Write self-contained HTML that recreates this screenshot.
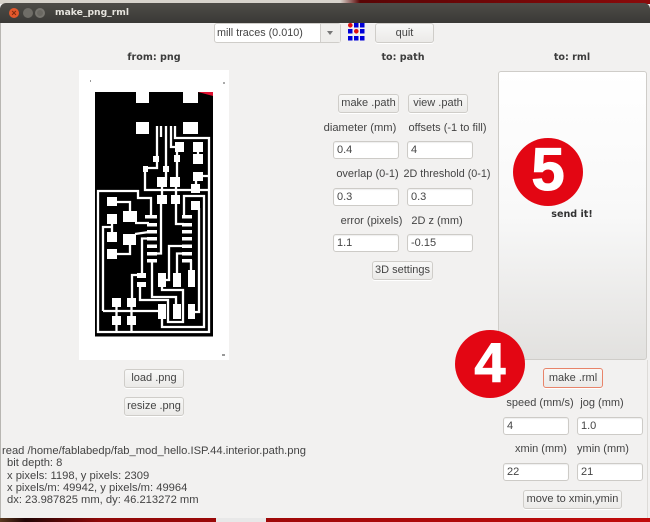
<!DOCTYPE html>
<html><head><meta charset="utf-8"><style>
html,body{margin:0;padding:0}
body{width:650px;height:522px;overflow:hidden;position:relative;background:#f2f1f0;font-family:"Liberation Sans",sans-serif;font-size:11px;color:#444}
div{position:absolute;box-sizing:border-box}
.l{white-space:nowrap;text-align:center;height:14px;line-height:14px}
.h{font-family:"DejaVu Sans",sans-serif;font-weight:bold;font-size:9.6px;white-space:nowrap;text-align:center;color:#3c3c3c;height:14px;line-height:14px}
.b{border:1px solid #cfcdc9;border-radius:3px;background:linear-gradient(#f8f8f7,#ebeae8);text-align:center;white-space:nowrap;height:20px;line-height:18px;box-shadow:0 1px 0 #fff}
.i{border:1px solid #cdcbc7;border-radius:3px;background:#fff;height:18px;width:66px;line-height:17px;padding-left:3px;box-shadow:inset 0 1px 1px #eee}
.t{left:2px;white-space:nowrap;height:13px;line-height:13px;font-size:11.2px}
.c{border-radius:50%;background:#e30613}
.n{font-weight:bold;font-size:60px;color:#fff;text-align:center;line-height:70px;height:70px;width:70px;-webkit-text-stroke:1px #fff}
</style></head><body>
<div style="left:0;top:0;width:650px;height:4px;background:linear-gradient(90deg,#d8d4cc 0,#d8d4cc 340px,#5a0505 360px,#8a0a0a 100%)"></div>
<div style="left:0;top:3px;width:650px;height:20px;background:linear-gradient(#4e4c47,#3a3936);border-radius:6px 6px 0 0"></div>
<div style="left:9px;top:8px;width:10px;height:10px;border-radius:50%;background:#e2582c"></div>
<div style="left:9px;top:8px;width:10px;height:10px;line-height:10px;text-align:center;font-size:9px;font-weight:bold;color:#7a2a10">×</div>
<div style="left:23px;top:8px;width:10px;height:10px;border-radius:50%;background:#6f6d67"></div>
<div style="left:35px;top:8px;width:10px;height:10px;border-radius:50%;background:#6a6862;border:2px solid #77756f"></div>
<div style="left:55px;top:5px;height:15px;line-height:15px;font-family:'DejaVu Sans',sans-serif;font-weight:bold;font-size:9.2px;color:#e6e4de;white-space:nowrap">make_png_rml</div>

<div style="left:0;top:23px;width:650px;height:495px;background:#f2f1f0;border-left:1px solid #b8b6b2"></div>
<div style="left:647px;top:360px;width:1px;height:158px;background:#dddbd8"></div>

<div style="left:214px;top:23px;width:127px;height:20px;border:1px solid #cfcdc9;border-radius:3px;background:#fff"></div>
<div style="left:217px;top:23px;height:20px;line-height:20px;white-space:nowrap;font-size:10.8px">mill traces (0.010)</div>
<div style="left:320px;top:24px;width:20px;height:18px;background:#efeeec;border-left:1px solid #d0cecb"></div>
<div style="left:327px;top:31px;width:0;height:0;border-left:3.5px solid transparent;border-right:3.5px solid transparent;border-top:4px solid #777"></div>
<svg style="position:absolute;left:348px;top:23px" width="18" height="18" viewBox="0 0 18 18">
<g fill="#0000d8"><rect x="6" y="0" width="4.5" height="4.5"/><rect x="12" y="0" width="4.5" height="4.5"/><rect x="0" y="6" width="4.5" height="4.5"/><rect x="12" y="6" width="4.5" height="4.5"/><rect x="0" y="13" width="4.5" height="4.5"/><rect x="6" y="13" width="4.5" height="4.5"/><rect x="12" y="13" width="4.5" height="4.5"/></g>
<circle cx="2.3" cy="2.3" r="2.3" fill="#e01010"/><circle cx="8.3" cy="8.3" r="2.3" fill="#e01010"/></svg>
<div class="b" style="left:375px;top:23px;width:59px;height:20px">quit</div>

<div class="h" style="left:104px;top:51px;width:100px">from: png</div>
<div class="h" style="left:353px;top:51px;width:100px">to: path</div>
<div class="h" style="left:522px;top:51px;width:100px">to: rml</div>

<svg style="position:absolute;left:79px;top:70px;filter:blur(.3px)" width="150" height="290" viewBox="79 70 150 290">
<rect x="79" y="70" width="150" height="290" fill="#fff"/>
<rect x="90" y="80" width="1" height="2" fill="#999"/><rect x="223" y="82" width="2" height="2" fill="#aaa"/><rect x="222" y="354" width="3" height="2" fill="#999"/>
<rect x="95" y="92" width="118" height="244.5" fill="#000"/>
<polygon points="198,92 213,92 213,96" fill="#e01030"/>
<g fill="#fff">
<rect x="136" y="92" width="13" height="11"/><rect x="183" y="92" width="15" height="11"/>
<rect x="136" y="122" width="13" height="12"/><rect x="183" y="122" width="15" height="12"/>
<rect x="175" y="142" width="9" height="10"/><rect x="193" y="142" width="10" height="10"/><rect x="193" y="154" width="10" height="10"/>
<rect x="153" y="156" width="6" height="6"/><rect x="174" y="155" width="6" height="7"/><rect x="163" y="166" width="6" height="6"/><rect x="143" y="166" width="5" height="6"/>
<rect x="157" y="177" width="10" height="10"/><rect x="170" y="177" width="10" height="10"/>
<rect x="193" y="172" width="10" height="9"/><rect x="191" y="184" width="9" height="9"/>
<rect x="157" y="195" width="10" height="9"/><rect x="171" y="195" width="9" height="9"/><rect x="191" y="201" width="9" height="9"/>
<rect x="107" y="197" width="10" height="9"/><rect x="123" y="211" width="14" height="11"/><rect x="107" y="214" width="10" height="10"/><rect x="107" y="232" width="10" height="10"/><rect x="123" y="234" width="13" height="11"/><rect x="107" y="249" width="10" height="10"/>
<rect x="145" y="215" width="12" height="3.5"/><rect x="147" y="223" width="10" height="3.5"/><rect x="147" y="230" width="10" height="3.5"/><rect x="147" y="237" width="10" height="3.5"/><rect x="147" y="244.5" width="10" height="3.5"/><rect x="147" y="252" width="10" height="3.5"/><rect x="147" y="259" width="10" height="3.5"/>
<rect x="182" y="215" width="10" height="3.5"/><rect x="182" y="223" width="10" height="3.5"/><rect x="182" y="230" width="10" height="3.5"/><rect x="182" y="237" width="10" height="3.5"/><rect x="182" y="244.5" width="10" height="3.5"/><rect x="182" y="252" width="10" height="3.5"/><rect x="182" y="259" width="10" height="3.5"/>
<rect x="137" y="273" width="9" height="5"/><rect x="137" y="282" width="9" height="5"/>
<rect x="158" y="273" width="8" height="14"/><rect x="173" y="273" width="8" height="14"/><rect x="188" y="270" width="7" height="17"/>
<rect x="158" y="304" width="8" height="15"/><rect x="173" y="304" width="8" height="15"/><rect x="188" y="304" width="7" height="15"/>
<rect x="112" y="298" width="9" height="9"/><rect x="127" y="298" width="9" height="9"/><rect x="112" y="316" width="9" height="9"/><rect x="127" y="316" width="9" height="9"/>
</g>
<g fill="none" stroke="#fff" stroke-width="2.3">
<path d="M157 126V158M161 126V137M166 126V168M171 126V147H178M175 126V138H209V332H98V191H138V198H151V216"/>
<path d="M177 148V180M166 172V180M157 160V168H146M145 172V190H209"/>
<path d="M198 152V156M209 176H200M196 180V186"/>
<path d="M162 187V197M176 187V197"/>
<path d="M161 204V253.5H155M176 204V224H184"/>
<path d="M184 216V196H204V327H162V315"/>
<path d="M199 208V312H193"/>
<path d="M117 202H130V212M135 223H149M135 234L149 232M117 254H130V243M103 311V227H112M112 224V233M103 311H160"/>
<path d="M152 262V297H176V305"/>
<path d="M149 238.5H142V274M138 275H132V299"/>
<path d="M140 286V300H168V322H183V290H162V286"/>
<path d="M184 246H169V280H165M184 253.5H177V274M191 260V271"/>
<path d="M116.5 306V317M131.5 306V317M116.5 324V332M131.5 324V332"/>
</g>
</svg>

<div class="b" style="left:124px;top:369px;width:60px;height:19px;line-height:17px">load .png</div>
<div class="b" style="left:124px;top:397px;width:60px;height:19px;line-height:17px">resize .png</div>

<div class="t" style="top:445px">read /home/fablabedp/fab_mod_hello.ISP.44.interior.path.png</div>
<div class="t" style="top:457px;left:7px">bit depth: 8</div>
<div class="t" style="top:470px;left:7px">x pixels: 1198, y pixels: 2309</div>
<div class="t" style="top:482px;left:7px">x pixels/m: 49942, y pixels/m: 49964</div>
<div class="t" style="top:494px;left:7px">dx: 23.987825 mm, dy: 46.213272 mm</div>

<div class="b" style="left:338px;top:94px;width:61px;height:19px;line-height:17px">make .path</div>
<div class="b" style="left:408px;top:94px;width:60px;height:19px;line-height:17px">view .path</div>

<div class="l" style="left:320px;top:121px;width:80px;font-size:11.2px">diameter (mm)</div>
<div class="l" style="left:400px;top:121px;width:95px">offsets (-1 to fill)</div>
<div class="i" style="left:333px;top:141px">0.4</div>
<div class="i" style="left:407px;top:141px">4</div>
<div class="l" style="left:320px;top:167px;width:90px;padding-left:5px">overlap (0-1)</div>
<div class="l" style="left:402px;top:167px;width:90px;font-size:10.8px">2D threshold (0-1)</div>
<div class="i" style="left:333px;top:188px">0.3</div>
<div class="i" style="left:407px;top:188px">0.3</div>
<div class="l" style="left:325px;top:214px;width:90px;padding-left:3px">error (pixels)</div>
<div class="l" style="left:402px;top:214px;width:70px">2D z (mm)</div>
<div class="i" style="left:333px;top:234px">1.1</div>
<div class="i" style="left:407px;top:234px">-0.15</div>
<div class="b" style="left:372px;top:261px;width:61px;height:19px;line-height:17px">3D settings</div>

<div style="left:498px;top:71px;width:149px;height:289px;border:1px solid #cfcdc9;border-radius:3px;background:linear-gradient(#fff 0,#f8f8f8 50%,#e2e1df 100%)"></div>
<div class="c" style="left:513px;top:138px;width:70px;height:68px"></div>
<div class="n" style="left:513px;top:135px">5</div>
<div class="h" style="left:522px;top:208px;width:100px;color:#333">send it!</div>

<div class="c" style="left:455px;top:330px;width:70px;height:68px"></div>
<div class="n" style="left:455px;top:328px;font-size:56px">4</div>
<div class="b" style="left:543px;top:368px;width:60px;height:20px;border-color:#e8846a;line-height:18px">make .rml</div>

<div class="l" style="left:500px;top:396px;width:80px">speed (mm/s)</div>
<div class="l" style="left:572px;top:396px;width:60px">jog (mm)</div>
<div class="i" style="left:503px;top:417px">4</div>
<div class="i" style="left:577px;top:417px">1.0</div>
<div class="l" style="left:506px;top:442px;width:70px">xmin (mm)</div>
<div class="l" style="left:572px;top:442px;width:62px">ymin (mm)</div>
<div class="i" style="left:503px;top:463px">22</div>
<div class="i" style="left:577px;top:463px">21</div>
<div class="b" style="left:523px;top:490px;width:99px;height:19px;line-height:17px">move to xmin,ymin</div>

<div style="left:0;top:518px;width:650px;height:4px;background:linear-gradient(90deg,#5a3a20 0,#200505 25px,#900808 100px,#c00a0a 100%)"></div>
<div style="left:216px;top:518px;width:50px;height:4px;background:#e8e8e8"></div>
</body></html>
